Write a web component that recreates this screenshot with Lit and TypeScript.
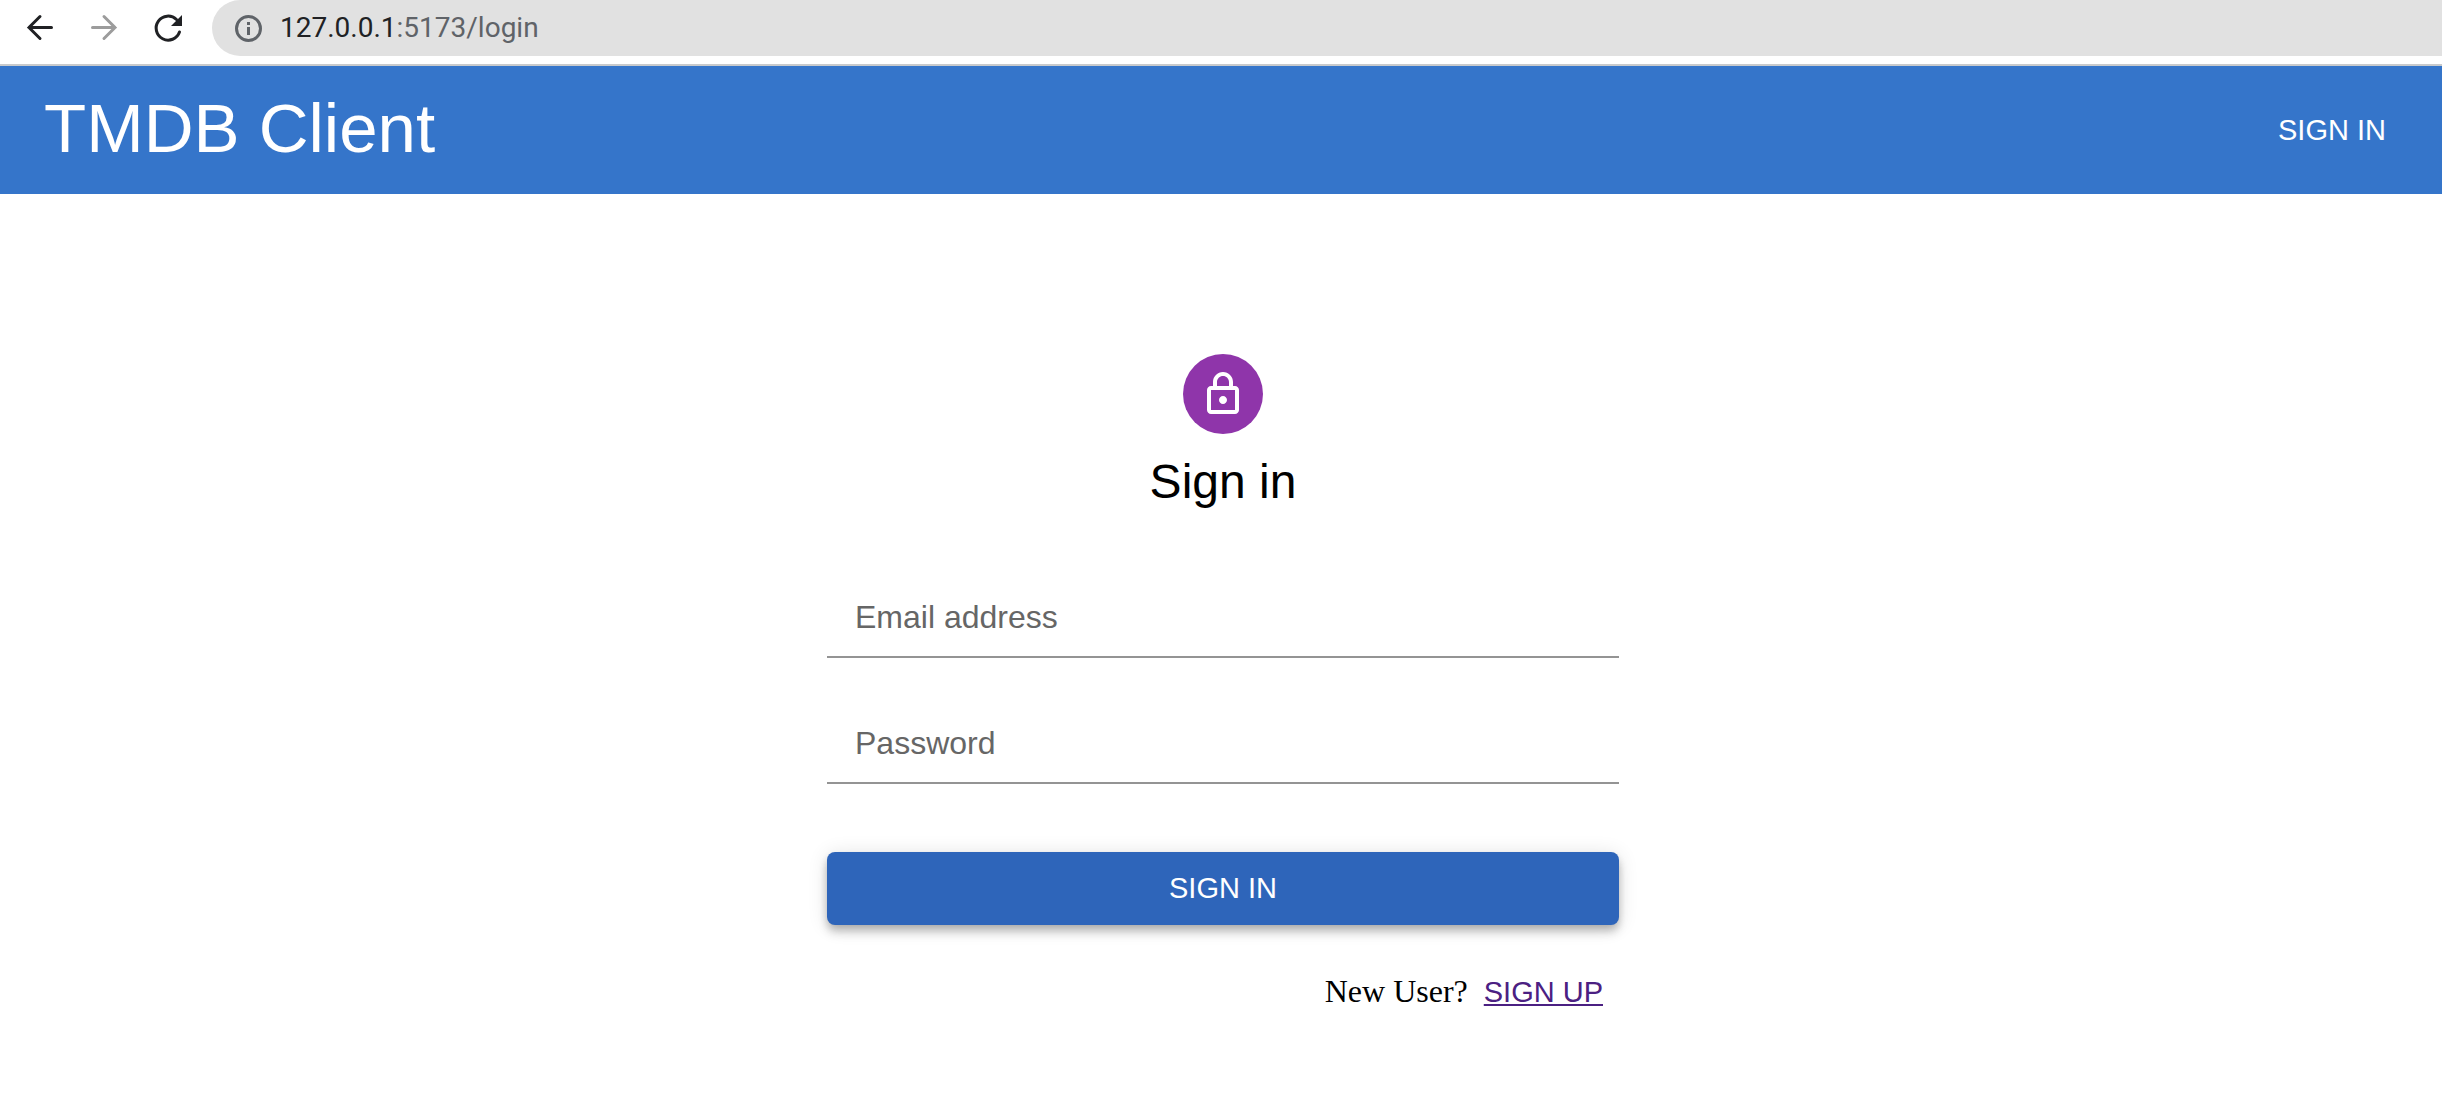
import { LitElement, html, css } from "lit";
import { customElement, property } from "lit/decorators.js";

@customElement("browser-bar")
export class BrowserBar extends LitElement {
  static styles = css`
    :host {
      display: block;
      background: #fff;
      border-bottom: 2px solid #c8cacc;
    }
    .bar {
      display: flex;
      align-items: center;
      gap: 24px;
      padding: 0 0 8px 20px;
    }
    .tool {
      display: flex;
      padding: 0;
      border: 0;
      background: none;
      color: #202124;
    }
    .tool:disabled {
      color: #9c9c9c;
    }
    .tool svg {
      width: 40px;
      height: 40px;
    }
    .address {
      display: flex;
      flex: 1;
      align-items: center;
      gap: 16px;
      height: 56px;
      padding-left: 20px;
      border-radius: 28px 0 0 28px;
      background: #e1e1e1;
      color: #5f6368;
      font: 28px/56px Roboto, sans-serif;
    }
    .address svg {
      width: 32px;
      height: 32px;
    }
    .host {
      color: #202124;
    }
  `;

  render() {
    return html`
      <nav class="bar" aria-label="Browser">
        <button class="tool" aria-label="Back">
          <svg viewBox="0 0 40 40" fill="none" stroke="currentColor" stroke-width="3" stroke-linecap="round"><path d="M31.500 19.500H9M20 8.500L9 19.500 20 30.500" /></svg>
        </button>
        <button class="tool" aria-label="Forward" disabled>
          <svg viewBox="0 0 40 40" fill="none" stroke="currentColor" stroke-width="3" stroke-linecap="round"><path d="M8.500 19.500H31M20 8.500L31 19.500 20 30.500" /></svg>
        </button>
        <button class="tool" aria-label="Reload">
          <svg viewBox="0 0 40 40" fill="none" stroke="currentColor" stroke-width="3" stroke-linecap="round">
            <path d="M31.500 24A12 12 0 1 1 28.500 11.500" />
            <path d="M34 7V18H23z" fill="currentColor" stroke="none" />
          </svg>
        </button>
        <div class="address">
          <svg viewBox="0 0 32 32" fill="none" stroke="currentColor" stroke-width="3">
            <circle cx="16.500" cy="16.500" r="12" /><path d="M16.500 15V23M16.500 10V13" />
          </svg>
          <span><span class="host">127.0.0.1</span>:5173/login</span>
        </div>
      </nav>
    `;
  }
}

@customElement("text-field")
export class TextField extends LitElement {
  @property() label = "";
  @property() type = "text";

  static styles = css`
    :host {
      display: block;
    }
    .field {
      display: grid;
      border-bottom: 2px solid #949494;
      font: 32px/46px "Liberation Sans", Arial, sans-serif;
    }
    .label,
    .input {
      grid-area: 1 / 1;
      padding: 32px 28px 16px;
    }
    .label {
      color: #666;
      pointer-events: none;
    }
    .input {
      min-width: 0;
      height: 46px;
      border: 0;
      outline: 0;
      background: none;
      color: #222;
      font: inherit;
    }
    .field:focus-within .label,
    .input:not(:placeholder-shown) + .label {
      padding-top: 0;
      font-size: 24px;
    }
  `;

  render() {
    return html`
      <div class="field">
        <input class="input" id="input" type=${this.type} placeholder=" " />
        <label class="label" for="input">${this.label}</label>
      </div>
    `;
  }
}

@customElement("app-root")
export class AppRoot extends LitElement {
  static styles = css`
    :host {
      display: block;
      min-height: 100vh;
      background: #fff;
      color: #000;
      font-family: "Liberation Sans", Arial, Helvetica, sans-serif;
    }
    .header {
      display: flex;
      align-items: center;
      justify-content: space-between;
      padding: 24px 56px 24px 44px;
      background: #3575ca;
      color: #fff;
    }
    .brand {
      margin: 0 0 2px;
      font-size: 69px;
      font-weight: 400;
      line-height: 78px;
    }
    .nav-link {
      color: inherit;
      font-size: 29px;
      text-decoration: none;
    }
    .main {
      display: flex;
      flex-direction: column;
      align-items: center;
      max-width: 792px;
      margin: 0 auto;
      padding: 160px 24px 24px 28px;
    }
    .avatar {
      display: grid;
      place-items: center;
      width: 80px;
      height: 80px;
      border-radius: 50%;
      background: #8f35aa;
    }
    .avatar svg {
      width: 48px;
      height: 48px;
      fill: #fff;
    }
    .title {
      margin: 16px 0 0;
      font-size: 48px;
      font-weight: 400;
      line-height: 64px;
    }
    .form {
      display: grid;
      gap: 30px;
      width: 100%;
      margin-top: 48px;
    }
    .submit {
      margin-top: 38px;
      padding: 12px 32px;
      border: 0;
      border-radius: 8px;
      background: #2e65ba;
      box-shadow:
        0 4px 8px -2px rgba(0, 0, 0, 0.2),
        0 8px 10px 0 rgba(0, 0, 0, 0.14),
        0 2px 20px 0 rgba(0, 0, 0, 0.12);
      color: #fff;
      font: 29px/49px "Liberation Sans", Arial, sans-serif;
    }
    .signup {
      display: flex;
      align-items: baseline;
      justify-content: flex-end;
      gap: 16px;
      margin: 12px 16px 0;
      font: 32px/49px "Liberation Serif", "Times New Roman", serif;
    }
    .signup-link {
      color: #4b2082;
      font: 29px/49px "Liberation Sans", Arial, sans-serif;
      text-decoration-thickness: 2px;
      text-underline-offset: 2px;
      text-decoration-skip-ink: none;
    }
  `;

  render() {
    return html`
      <browser-bar></browser-bar>
      <header class="header">
        <h1 class="brand">TMDB Client</h1>
        <a class="nav-link" href="/login">SIGN IN</a>
      </header>
      <main class="main">
        <div class="avatar">
          <svg viewBox="0 0 24 24" aria-hidden="true">
            <path d="M12 17c1.100 0 2-.9 2-2s-.9-2-2-2-2 .9-2 2 .9 2 2 2zm6-9h-1V6c0-2.760-2.240-5-5-5S7 3.240 7 6v2H6c-1.100 0-2 .9-2 2v10c0 1.100.9 2 2 2h12c1.100 0 2-.9 2-2V10c0-1.100-.9-2-2-2zM9 6c0-1.660 1.340-3 3-3s3 1.340 3 3v2H9V6zm9 14H6V10h12v10z" />
          </svg>
        </div>
        <h2 class="title">Sign in</h2>
        <form class="form" @submit=${(e: Event) => e.preventDefault()}>
          <text-field label="Email address" type="email"></text-field>
          <text-field label="Password" type="password"></text-field>
          <button class="submit" type="submit">SIGN IN</button>
          <div class="signup">
            <span>New User?</span>
            <a class="signup-link" href="/signup">SIGN UP</a>
          </div>
        </form>
      </main>
    `;
  }
}
